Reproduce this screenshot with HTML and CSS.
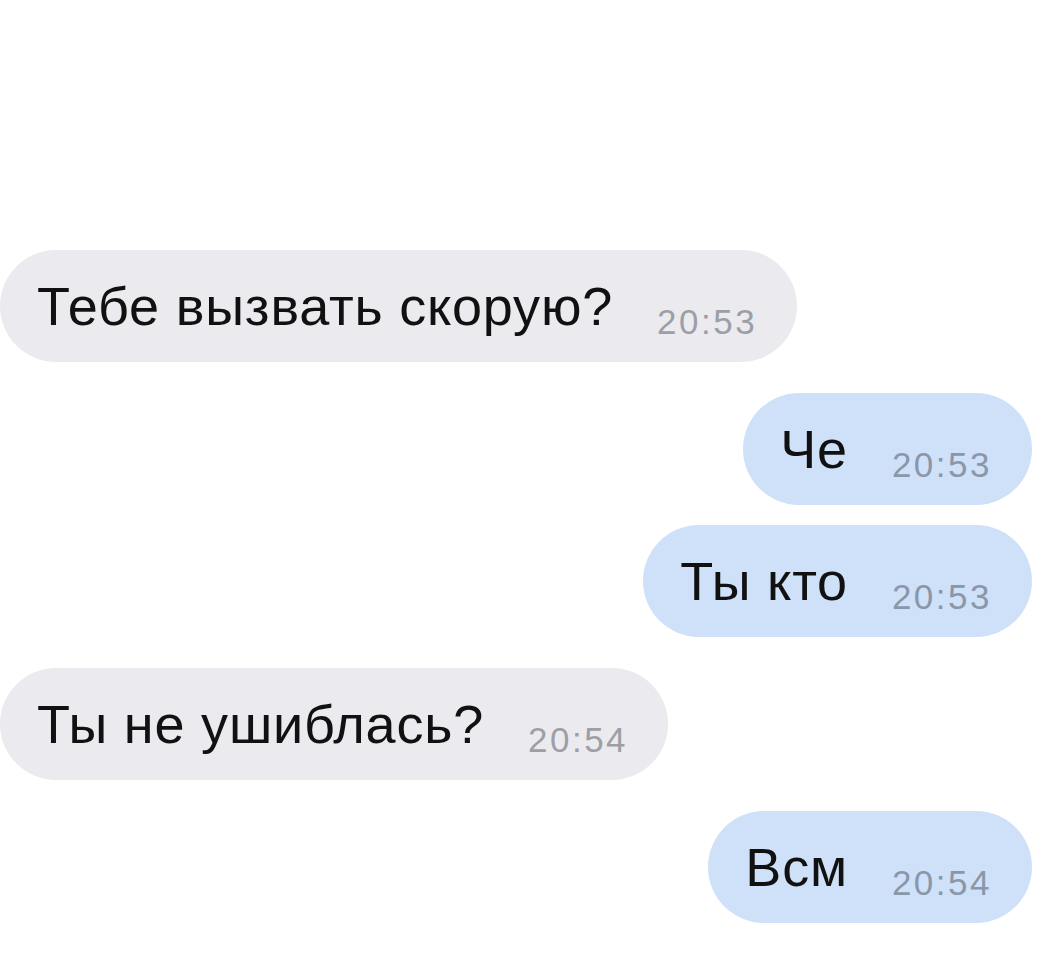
FILE: index.html
```html
<!DOCTYPE html>
<html lang="ru">
<head>
    <meta charset="UTF-8">
    <meta name="viewport" content="width=device-width, initial-scale=1.0">
    <title>Чат</title>
    <link rel="stylesheet" href="styles.css">
</head>
<body>
    <div class="chat">
        <!-- входящее -->
        <div class="msg in">
            <span class="text">Тебе вызвать скорую?</span>
            <span class="time">20:53</span>
        </div>

        <!-- исходящие -->
        <div class="msg out first">
            <span class="text">Че</span>
            <span class="time">20:53</span>
        </div>
        <div class="msg out">
            <span class="text">Ты кто</span>
            <span class="time">20:53</span>
        </div>

        <div class="msg in first">
            <span class="text">Ты не ушиблась?</span>
            <span class="time">20:54</span>
        </div>

        <div class="msg out first">
            <span class="text">Всм</span>
            <span class="time">20:54</span>
        </div>
    </div>
</body>
</html>
```

FILE: styles.css
```css
body {
    font-family: "Liberation Sans", Arial, sans-serif;
    margin: 0;
    padding: 0;
    background-color: #ffffff;
}

.chat {
    display: flex;
    flex-direction: column;
    gap: 20px;
    padding: 250px 16px 30px 0;
}

.msg {
    display: flex;
    align-items: center;
    gap: 44px;
    height: 112px;
    box-sizing: border-box;
    padding: 0 40px 0 37px;
    border-radius: 56px;
}

.msg.first {
    margin-top: 11px;
}

.msg.in {
    align-self: flex-start;
    background-color: #ebebef;
}

.msg.out {
    align-self: flex-end;
    background-color: #cfe1f8;
}

.text {
    font-size: 54px;
    letter-spacing: 0.8px;
    color: #111111;
}

.time {
    font-size: 35px;
    letter-spacing: 2.5px;
    color: #9d9fa6;
    position: relative;
    top: 16px;
}

.msg.out .time {
    color: #8a97a8;
}
```
